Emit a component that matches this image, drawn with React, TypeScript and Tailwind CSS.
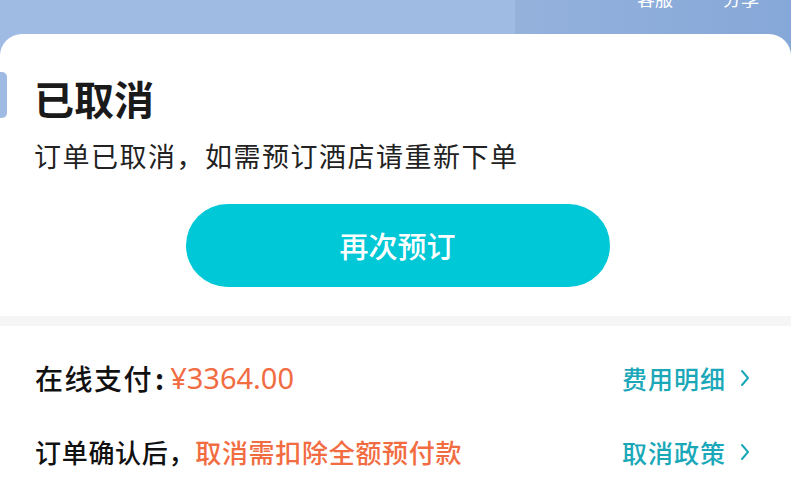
import React from "react";

function Chevron() {
  return (
    <svg width="10" height="18" viewBox="0 0 10 18" className="ml-[14px]" fill="none">
      <path d="M2 2 L8 9 L2 16" stroke="currentColor" strokeWidth="2" strokeLinecap="round" strokeLinejoin="round" />
    </svg>
  );
}

export default function App() {
  return (
    <div
      className="relative w-[791px] h-[500px] overflow-hidden bg-[#a0bbe3]"
      style={{ fontFamily: '"Noto Sans CJK SC", "Noto Sans", sans-serif' }}
    >
      {/* top-right header image area */}
      <div className="absolute right-0 top-0 w-[276px] h-[60px] bg-gradient-to-r from-[#94b1dc] to-[#86a8d8]">
        <div className="flex gap-[50px] pl-[122px] -mt-[11px] text-white text-[18px] leading-[18px]">
          <span>客服</span>
          <span>分享</span>
        </div>
      </div>

      <div className="relative mt-[34px] h-[466px] bg-white rounded-t-[22px] flex flex-col">
        {/* left tab */}
        <div className="absolute left-0 top-[38px] w-[7px] h-[46px] bg-[#a0bbe3] rounded-r-[5px]" />

        <div className="pl-[34px] pt-[40px]">
          <h1 className="text-[40px] leading-[48px] font-bold text-[#1a1a1a]">已取消</h1>
          <p className="mt-[18px] text-[27px] leading-[32px] tracking-[1.5px] text-[#222]">
            订单已取消，如需预订酒店请重新下单
          </p>
        </div>

        <div className="flex justify-center mt-[32px]">
          <button className="w-[424px] h-[83px] ml-[4px] rounded-full bg-[#00c8d6] text-white text-[29px] font-medium">
            再次预订
          </button>
        </div>

        <div className="mt-[29px] h-[10px] bg-[#f5f5f5]" />

        <div className="flex items-center justify-between pl-[35px] pr-[41px] mt-[34px] h-[36px]">
          <div className="flex items-center">
            <span className="text-[28px] leading-[36px] tracking-[1.5px] font-medium text-[#111]">在线支付</span>
            <span className="text-[28px] leading-[36px] font-bold text-[#111] ml-[2px]">:</span>
            <span className="text-[29px] leading-[36px] text-[#f26c42] ml-[6px]" style={{ fontFamily: '"Noto Sans", sans-serif' }}>
              ¥3364.00
            </span>
          </div>
          <div className="flex items-center text-[#1aa8b9] text-[25px] leading-[36px] tracking-[1px] font-medium">
            <span>费用明细</span>
            <Chevron />
          </div>
        </div>

        <div className="flex items-center justify-between pl-[35px] pr-[41px] mt-[38px] h-[36px]">
          <div className="flex items-center text-[26px] leading-[36px] tracking-[0.7px] font-medium">
            <span className="text-[#111]">订单确认后，</span>
            <span className="text-[#f26c42]">取消需扣除全额预付款</span>
          </div>
          <div className="flex items-center text-[#1aa8b9] text-[25px] leading-[36px] tracking-[1px] font-medium">
            <span>取消政策</span>
            <Chevron />
          </div>
        </div>
      </div>
    </div>
  );
}
